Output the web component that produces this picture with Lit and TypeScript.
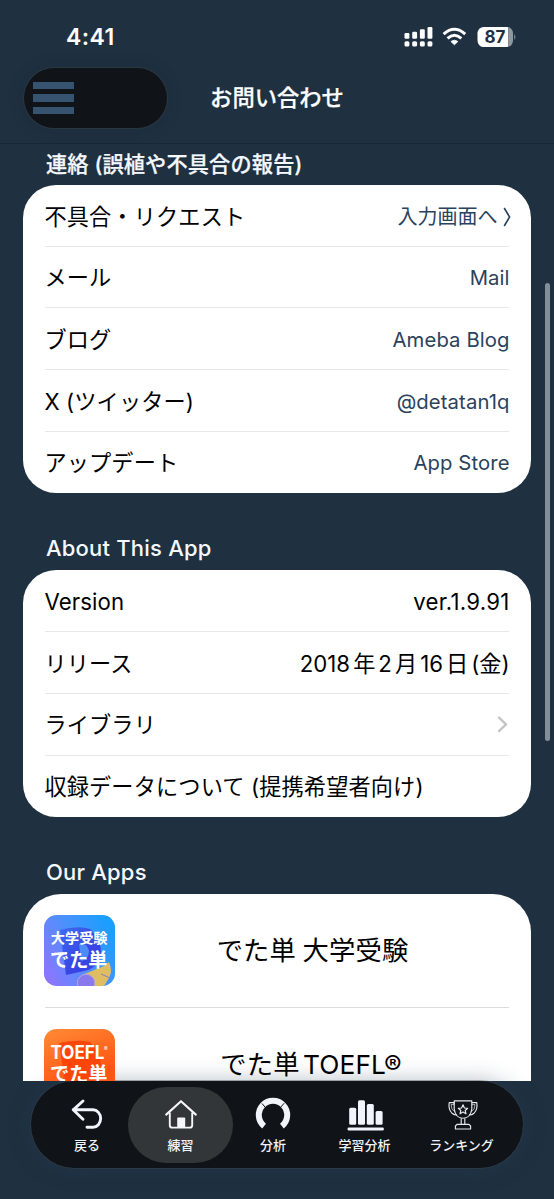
import { LitElement, html, css, svg, nothing } from "lit";
import { customElement, property } from "lit/decorators.js";

type Row = { label: string; value?: string; kind?: string; chevron?: boolean };

const CONTACT: Row[] = [
  { label: "不具合・リクエスト", value: "入力画面へ", kind: "link jp", chevron: false },
  { label: "メール", value: "Mail", kind: "link" },
  { label: "ブログ", value: "Ameba Blog", kind: "link" },
  { label: "X (ツイッター)", value: "@detatan1q", kind: "link" },
  { label: "アップデート", value: "App Store", kind: "link" },
];

const FONT = css`"Inter", "Noto Sans CJK JP", sans-serif`;

@customElement("status-bar")
class StatusBar extends LitElement {
  static styles = css`
    :host { display: flex; height: 60px; justify-content: space-between; align-items: flex-start;
      box-sizing: border-box; padding: 25px 38px 0 66px; color: #fff; font-family: ${FONT}; }
    .time { font-size: 23px; font-weight: 600; line-height: 25px; letter-spacing: 0.4px; }
    .icons { display: block; }
    .pct { font: 700 17px "Inter", sans-serif; letter-spacing: -0.2px; }
  `;
  render() {
    const xs = [0, 7.7, 15.4, 23];
    const tops = [7, 5.8, 3.2, 0.9];
    return html`
      <div class="time">4:41</div>
      <svg class="icons" width="112" height="24" viewBox="0 0 112 24">
        <g fill="#fff">
          ${xs.map((x, i) => svg`
            <rect x=${x + 0.5} y=${tops[i] + 1} width="4.9" height=${12.8 - tops[i]} rx="1.3"></rect>
            <rect x=${x + 0.5} y="16.2" width="4.9" height="5.4" rx="1.6"></rect>`)}
          <path d="M50.4 19.8 L46.9 16.5 Q50.4 13.9 53.9 16.5 Z" stroke="#fff" stroke-width="0.8" stroke-linejoin="round"></path>
        </g>
        <g fill="none" stroke="#fff" stroke-width="3">
          <path d="M39.6 9.2 Q50.4 -0.6 61.2 9.2"></path>
          <path d="M43.5 13.3 Q50.4 7.1 57.3 13.3"></path>
        </g>
        <clipPath id="b"><rect x="73.5" y="2" width="35.5" height="20" rx="6.3"></rect></clipPath>
        <g clip-path="url(#b)">
          <rect x="73" y="2" width="31.3" height="20" fill="#fff"></rect>
          <rect x="104.3" y="2" width="6" height="20" fill="#8f979f"></rect>
        </g>
        <path d="M110.3 9 Q112.6 12 110.3 15 Z" fill="#8f979f"></path>
        <text class="pct" x="90.8" y="18.1" text-anchor="middle" fill="#1f3040">87</text>
      </svg>`;
  }
}

@customElement("page-header")
class PageHeader extends LitElement {
  static styles = css`
    :host { display: grid; grid-template-columns: 1fr auto 1fr; align-items: center; height: 84px; box-sizing: border-box;
      padding: 0 24px 8px; border-bottom: 1px solid #192734; font-family: ${FONT}; }
    .menu { width: 142.5px; height: 60px; border-radius: 30px; background: #101318; box-sizing: border-box;
      box-shadow: 0 0 0 1px #2b3740, 0 0 18px rgba(12, 25, 38, 0.13); padding: 14px 0 0 9px; display: flex; flex-direction: column; gap: 5px; }
    .line { width: 41px; height: 7.6px; background: #36536f; }
    .title { font-size: 22.3px; font-weight: 500; color: #fff; line-height: 30px; padding-top: 1px; -webkit-text-stroke: 0.25px #fff; }
  `;
  render() {
    return html`
      <div class="menu"><div class="line"></div><div class="line"></div><div class="line"></div></div>
      <div class="title">お問い合わせ</div><div></div>`;
  }
}

@customElement("list-card")
class ListCard extends LitElement {
  @property({ attribute: false }) rows: Row[] = [];
  static styles = css`
    :host { display: block; background: #fff; border-radius: 33px; padding: 0 22px; font-family: ${FONT}; color: #000; }
    .row { height: 61.7px; box-sizing: border-box; display: flex; justify-content: space-between; align-items: center; padding-top: 2.4px;
      border-bottom: 1.3px solid #e7e7e8; font-size: 22.2px; line-height: 30px; white-space: nowrap; }
    .row:last-child { border-bottom-color: transparent; }
    .label { margin-left: -0.6px; letter-spacing: 0.13px; }
    .value { display: flex; align-items: center; }
    .link { font-size: 20.3px; color: #2b425c; letter-spacing: 0.1px; margin-right: -0.6px; }
    .jp { font-size: 20px; gap: 5px; letter-spacing: 0; margin-right: -1.5px; }
    .ver { letter-spacing: 0.25px; margin-right: -0.6px; }
    .date { word-spacing: -3.2px; margin-right: -0.6px; }
  `;
  render() {
    return this.rows.map((r) => html`
      <div class="row">
        <span class="label">${r.label}</span>
        <span class="value ${r.kind ?? ""}">${r.value ?? nothing}
          ${r.kind?.includes("jp")
            ? html`<svg width="8" height="20" viewBox="0 0 8 20"><path d="M1.2 1 L6.6 10 L1.2 19" fill="none" stroke="#2b425c" stroke-width="1.6"></path></svg>`
            : nothing}
          ${r.chevron
            ? html`<svg width="13" height="20" viewBox="0 0 13 20"><path d="M3 2.6 L10.1 9.4 L3 16.2" fill="none" stroke="#c4c4c7" stroke-width="2.3" stroke-linecap="round" stroke-linejoin="round"></path></svg>`
            : nothing}
        </span>
      </div>`);
  }
}

@customElement("app-list")
class AppList extends LitElement {
  static styles = css`
    :host { display: block; height: 187px; overflow: hidden; background: #fff; border-radius: 38px 38px 0 0;
      box-sizing: border-box; padding: 0 22px 0 21px; font-family: ${FONT}; color: #000; }
    .row { height: 112.5px; box-sizing: border-box; display: flex; align-items: center; padding-top: 1px; }
    .row + .row { height: 115.5px; border-top: 1px solid #dcdcde; margin-left: 1px; padding-top: 0; }
    .row + .row .tile { margin-left: -1px; }
    .tile { flex: none; width: 71px; height: 71px; display: block; }
    .name { flex: 1; text-align: center; font-size: 26.3px; line-height: 36px; white-space: nowrap; }
    .kyo { padding: 1px 2px 0 3px; letter-spacing: 0.15px; word-spacing: -1px; }
    .toefl { padding-right: 2px; letter-spacing: 0.1px; word-spacing: -4px; }
    text { fill: #fff; font-family: "Inter", "Noto Sans CJK JP", sans-serif; font-weight: 700; }
  `;
  render() {
    return html`
      <div class="row">
        <svg class="tile" viewBox="0 0 71 71">
          <defs>
            <linearGradient id="g1" x1="0" y1="0.75" x2="1" y2="0.2">
              <stop offset="0" stop-color="#8978ff"></stop><stop offset="0.5" stop-color="#4b91fb"></stop><stop offset="1" stop-color="#16a0ff"></stop>
            </linearGradient>
            <linearGradient id="g2" x1="0" y1="0" x2="1" y2="1">
              <stop offset="0" stop-color="#3d6cf0"></stop><stop offset="0.6" stop-color="#3845e4"></stop>
            </linearGradient>
            <clipPath id="c1"><rect width="71" height="71" rx="12.5"></rect></clipPath>
          </defs>
          <g clip-path="url(#c1)">
            <rect width="71" height="71" fill="url(#g1)"></rect>
            <path d="M16 15 Q34 10 46 14 Q58 25 57 40 Q53 54 40 56 L22 60 Z" fill="url(#g2)"></path>
            <path d="M35 29 Q43 27 45 36 Q45 44 37 46 Z" fill="#4d8bf8"></path>
            <path d="M38 60 L60 51 L65 47 Q69 56 65 63 L60 71 H42 Z" fill="#dfbd62"></path>
            <path d="M57 59 L66 63" stroke="#857fc0" stroke-width="1" fill="none"></path>
            <circle cx="42" cy="68" r="8.7" fill="#8a79ed" stroke="#b3a2df" stroke-width="1"></circle>
          </g>
          <text x="6.8" y="28" font-size="14.2">大学受験</text>
          <text x="6" y="52" font-size="19.2">でた単</text>
        </svg>
        <div class="name kyo">でた単 大学受験</div>
      </div>
      <div class="row">
        <svg class="tile" viewBox="0 0 71 71">
          <defs>
            <linearGradient id="g3" x1="0" y1="0" x2="0.4" y2="1">
              <stop offset="0" stop-color="#ff8b35"></stop><stop offset="0.8" stop-color="#ff5514"></stop>
            </linearGradient>
            <clipPath id="c2"><rect width="71" height="71" rx="12.5"></rect></clipPath>
          </defs>
          <g clip-path="url(#c2)">
            <rect width="71" height="71" fill="url(#g3)"></rect>
            <path d="M15 14 Q34 10 46 13 Q58 25 57 40 Q53 54 40 56 L22 60 Z" fill="#fc4609"></path>
          </g>
          <text x="6.5" y="30.2" font-size="18.3" textLength="54" lengthAdjust="spacingAndGlyphs">TOEFL</text>
          <text x="60" y="21.7" font-size="5.5">®</text>
          <text x="6" y="52" font-size="19.2">でた単</text>
        </svg>
        <div class="name toefl">でた単 TOEFL®</div>
      </div>`;
  }
}

const ICONS = [
  svg`<path d="M13 3 L3.2 11.8 L13 21.2 M3.2 11.8 H23 A7.6 8.7 0 0 1 23 29.3 H17" fill="none" stroke="#f1f4fb" stroke-width="2.9" stroke-linecap="round" stroke-linejoin="round"></path>`,
  svg`<path d="M2.2 16.6 L17 3.2 L31.8 16.6" fill="none" stroke="#f4f6fb" stroke-width="2.1" stroke-linecap="round" stroke-linejoin="round"></path>
      <path d="M5.8 14.5 V27.2 Q5.8 29.6 8.2 29.6 H25.8 Q28.2 29.6 28.2 27.2 V14.5" fill="none" stroke="#f4f6fb" stroke-width="1.9"></path>
      <rect x="13.2" y="19.6" width="8" height="10" rx="1" fill="#f4f6fb"></rect>`,
  svg`<path d="M8.1 28.1 A14.2 14.2 0 1 1 25.9 28.1" fill="none" stroke="#f1f4fb" stroke-width="6"></path>
      <path d="M6 5.5 L11.5 12 M28.2 5.2 L22 12.2" stroke="#101318" stroke-width="1"></path>`,
  svg`<g fill="#f1f4fb"><rect x="1.2" y="9.8" width="7" height="17" rx="1.5"></rect><rect x="10" y="2.3" width="7" height="24.5" rx="1.5"></rect>
      <rect x="18.8" y="6" width="7" height="20.8" rx="1.5"></rect><rect x="27.6" y="13" width="7" height="13.8" rx="1.5"></rect><rect x="-0.4" y="29.4" width="36.2" height="3" rx="1.2"></rect></g>`,
  svg`<g fill="none" stroke="#e6e9ef" stroke-width="1.15" stroke-linejoin="round">
      <path d="M9.2 2.8 H26.8 V11 Q25.5 20.2 18 20.2 Q10.5 20.2 9.2 11 Z"></path>
      <path d="M9.2 6.2 V4.6 H4.2 Q3.2 11.4 7 15.2 Q9 17 11.9 17 M26.8 4.6 H31.8 Q32.8 11.4 29 15.2 Q27 17 24.1 17"></path>
      <path d="M6 6.6 H9.2 M6 6.6 Q6 12 10 14 M30 6.6 H26.8 M30 6.6 Q30 12 26 14" stroke-width="0.7"></path>
      <path d="M18 6.8 L19.4 10 L22.7 10.3 L20.2 12.5 L21 15.8 L18 14 L15 15.8 L15.8 12.5 L13.3 10.3 L16.6 10 Z"></path>
      <path d="M16.2 20.2 V26.3 M19.8 20.2 V26.3 M12 26.3 H24 L25.6 28 V31 H10.4 V28 Z"></path></g>`,
];
const TABS = ["戻る", "練習", "分析", "学習分析", "ランキング"];

@customElement("tab-bar")
class TabBar extends LitElement {
  static styles = css`
    :host { display: grid; grid-template-columns: 82px 105px 80px 103px 91px; box-sizing: border-box; width: 492px; height: 87px; margin: 0 0 0 31px;
      padding: 6px 15px; border-radius: 43.5px; background: #101318; box-shadow: 0 0 0 1px rgba(62, 68, 72, 0.4), 0 0 22px rgba(35, 64, 90, 0.35); font-family: ${FONT}; }
    .tab { display: flex; flex-direction: column; align-items: center; color: #f1f4fb; padding-top: 10.5px; box-sizing: border-box; height: 76px; }
    .on { background: #323639; border-radius: 38px; }
    .tab svg { overflow: visible; display: block; }
    .label { font-size: 13px; font-weight: 500; line-height: 20px; margin-top: 3px; white-space: nowrap; }
  `;
  render() {
    return TABS.map((t, i) => html`
      <div class="tab ${i === 1 ? "on" : ""}">
        <svg width="34" height="34" viewBox="0 0 34 34">${ICONS[i]}</svg>
        <div class="label">${t}</div>
      </div>`);
  }
}

@customElement("app-root")
class AppRoot extends LitElement {
  static styles = css`
    :host { display: block; position: relative; width: 554px; height: 1199px; overflow: hidden; background: #1f3040; font-family: ${FONT}; }
    .body { padding: 0 23px; }
    .head { color: #f4f8fe; font-size: 22px; font-weight: 500; line-height: 28px; padding-left: 23px; white-space: nowrap; letter-spacing: 0.2px; }
    .h1 { padding-top: 6px; padding-bottom: 7px; font-size: 21.2px; letter-spacing: 0.15px; -webkit-text-stroke: 0.25px #f4f8fe; }
    .h2 { padding-top: 41px; padding-bottom: 8px; }
    .h3 { padding-top: 41px; padding-bottom: 8px; }
    .scroll { position: absolute; left: 545px; top: 283px; width: 5px; height: 458px; border-radius: 3px; background: #848e98; }
  `;
  render() {
    const about: Row[] = [
      { label: "Version", value: "ver.1.9.91", kind: "ver" },
      { label: "リリース", value: "2018 年 2 月 16 日 (金)", kind: "date" },
      { label: "ライブラリ", chevron: true },
      { label: "収録データについて (提携希望者向け)" },
    ];
    return html`
      <status-bar></status-bar>
      <page-header></page-header>
      <div class="body">
        <div class="head h1">連絡 (誤植や不具合の報告)</div>
        <list-card .rows=${CONTACT}></list-card>
        <div class="head h2">About This App</div>
        <list-card .rows=${about}></list-card>
        <div class="head h3">Our Apps</div>
        <app-list></app-list>
      </div>
      <tab-bar></tab-bar>
      <div class="scroll"></div>`;
  }
}
